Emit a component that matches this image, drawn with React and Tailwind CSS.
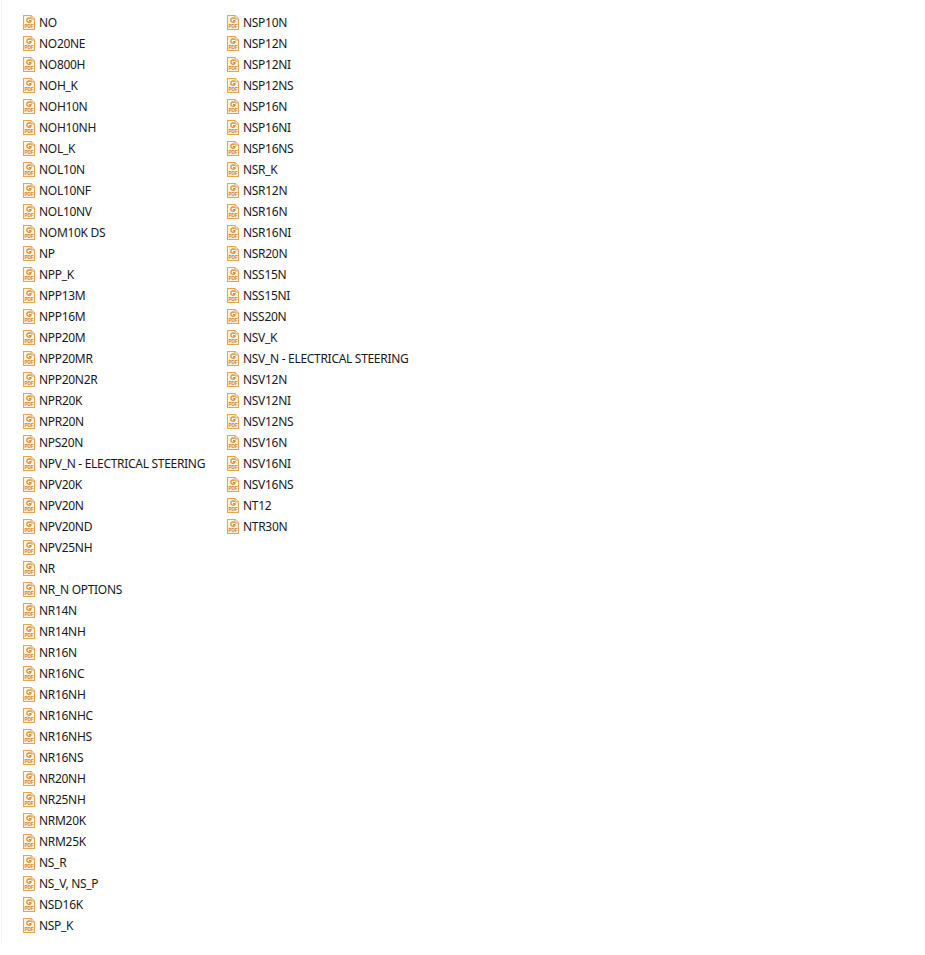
const leftFiles = [
  'NO', 'NO20NE', 'NO800H', 'NOH_K', 'NOH10N', 'NOH10NH', 'NOL_K', 'NOL10N', 'NOL10NF', 'NOL10NV',
  'NOM10K DS', 'NP', 'NPP_K', 'NPP13M', 'NPP16M', 'NPP20M', 'NPP20MR', 'NPP20N2R', 'NPR20K', 'NPR20N',
  'NPS20N', 'NPV_N - ELECTRICAL STEERING', 'NPV20K', 'NPV20N', 'NPV20ND', 'NPV25NH', 'NR', 'NR_N OPTIONS',
  'NR14N', 'NR14NH', 'NR16N', 'NR16NC', 'NR16NH', 'NR16NHC', 'NR16NHS', 'NR16NS', 'NR20NH', 'NR25NH',
  'NRM20K', 'NRM25K', 'NS_R', 'NS_V, NS_P', 'NSD16K', 'NSP_K',
];

const rightFiles = [
  'NSP10N', 'NSP12N', 'NSP12NI', 'NSP12NS', 'NSP16N', 'NSP16NI', 'NSP16NS', 'NSR_K', 'NSR12N', 'NSR16N',
  'NSR16NI', 'NSR20N', 'NSS15N', 'NSS15NI', 'NSS20N', 'NSV_K', 'NSV_N - ELECTRICAL STEERING', 'NSV12N',
  'NSV12NI', 'NSV12NS', 'NSV16N', 'NSV16NI', 'NSV16NS', 'NT12', 'NTR30N',
];

function PdfIcon() {
  return (
    <svg width="17" height="17" viewBox="0 0 17 17" className="shrink-0">
      <path d="M1.5 1.5H9L12.5 5V15.5H1.5Z" fill="#fff6e8" stroke="#e8a44f" strokeWidth="1.1" />
      <path d="M9 1.5V5H12.5" fill="#f6e0c0" stroke="#d4a76f" strokeWidth="1" />
      <path d="M8.6 4.6C7 3.4 4.8 4.2 4.8 6.2C4.8 8.4 7.6 9 8.9 7.4V6.6H7" fill="none" stroke="#e08a33" strokeWidth="1.3" />
      <rect x="2" y="10.2" width="10" height="4.8" fill="#fdeeda" />
      <text x="7" y="14.2" textAnchor="middle" fontSize="4.6" fontWeight="700" fill="#d08035" fontFamily="Liberation Sans, sans-serif">PDF</text>
    </svg>
  );
}

function FileRow({ name }) {
  return (
    <div className="flex items-start h-[21px] pt-[2px]">
      <PdfIcon />
      <span className="text-[12px] leading-[17px] tracking-[-0.3px] text-[#1a1a1a] whitespace-nowrap font-['Noto_Sans',sans-serif]">{name}</span>
    </div>
  );
}

export default function App() {
  return (
    <div className="w-[925px] h-[955px] bg-white overflow-hidden">
      <div className="flex pt-[12px] pl-[20px] h-[942px] border-l border-[#f1f1f1] ml-[1px]">
        <div className="w-[204px]">
          {leftFiles.map((f) => <FileRow key={f} name={f} />)}
        </div>
        <div className="w-[204px]">
          {rightFiles.map((f) => <FileRow key={f} name={f} />)}
        </div>
      </div>
    </div>
  );
}
